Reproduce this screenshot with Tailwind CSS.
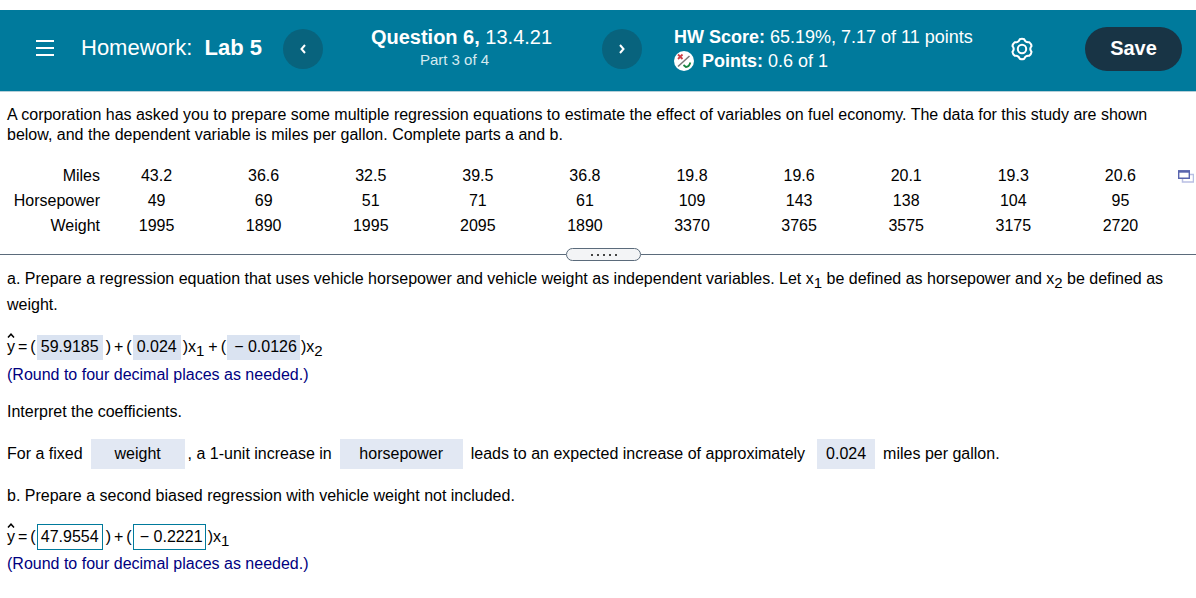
<!DOCTYPE html>
<html lang="en">
<head>
<meta charset="utf-8">
<meta name="viewport" content="width=device-width, initial-scale=1">
<title>Homework: Lab 5</title>
<script src="https://cdn.jsdelivr.net/npm/@tailwindcss/browser@4"></script>
</head>
<body class="bg-white pt-[10px] font-['Liberation_Sans',Arial,sans-serif] text-base leading-5 text-black">
<header class="flex h-[82px] items-start border-b border-[#b5cfd8] bg-[#007a9c] pr-[14px] pl-9 text-white">
  <button type="button" aria-label="Menu" class="mt-7 h-5 w-[19px] shrink-0">
    <svg viewBox="0 0 19 20" class="h-5 w-[19px]" fill="none" stroke="currentColor" stroke-width="2"><path d="M0 3h18M0 10h18M0 17h18"/></svg>
  </button>
  <h1 class="mt-6 ml-[26px] w-[202px] shrink-0 text-[22px] leading-7 whitespace-nowrap">Homework:&nbsp; <b>Lab 5</b></h1>
  <button type="button" aria-label="Previous question" class="mt-[19px] flex size-10 shrink-0 items-center justify-center rounded-full bg-[#08637d]">
    <svg viewBox="0 0 8 12" class="h-3 w-2" fill="none" stroke="currentColor" stroke-width="2"><path d="M6 2 2.500 6 6 10"/></svg>
  </button>
  <div class="mt-[15px] w-[279px] shrink-0 text-center">
    <p class="pr-[2px] text-xl leading-6"><b>Question 6,</b> 13.4.21</p>
    <p class="pr-4 text-[15px] leading-[22px] text-[#d5eaf0]">Part 3 of 4</p>
  </div>
  <button type="button" aria-label="Next question" class="mt-[19px] flex size-10 shrink-0 items-center justify-center rounded-full bg-[#08637d]">
    <svg viewBox="0 0 8 12" class="h-3 w-2" fill="none" stroke="currentColor" stroke-width="2"><path d="M2 2 5.500 6 2 10"/></svg>
  </button>
  <div class="mt-[15px] ml-8 text-lg leading-6 whitespace-nowrap">
    <p><b>HW Score:</b> 65.19%, 7.17 of 11 points</p>
    <p class="flex items-center gap-2">
      <svg viewBox="0 0 20 20" class="size-5" fill="none" aria-hidden="true"><circle cx="10" cy="10" r="10" fill="#fff"/><path d="M4 15.500 15.500 5" stroke="#777" stroke-width="1.500"/><path d="m4 3.500 4.500 4.500m0-4.500L4 8" stroke="#cf4048" stroke-width="1.800"/><path d="m9.500 14 2.500 2c2 0 3.500-1.500 4.300-4.500" stroke="#178540" stroke-width="1.800"/></svg>
      <span><b>Points:</b> 0.6 of 1</span>
    </p>
  </div>
  <button type="button" aria-label="Settings" class="mt-[27px] ml-auto size-6 shrink-0">
    <svg viewBox="0 0 24 24" class="size-6" fill="none" stroke="currentColor" stroke-width="2" stroke-linejoin="round"><path d="M9.750 2.260Q12 1.400 14.250 2.260 15.500 5.940 19.300 5.200 21.200 6.700 21.560 9.100 19 12 21.560 14.900 21.200 17.300 19.300 18.800 15.500 18.060 14.250 21.740 12 22.600 9.750 21.740 8.500 18.060 4.700 18.800 2.800 17.300 2.440 14.900 5 12 2.440 9.100 2.800 6.700 4.700 5.200 8.500 5.940 9.750 2.260Z"/><circle cx="12" cy="12" r="4.200"/></svg>
  </button>
  <button type="button" class="mt-[17px] ml-[51px] h-11 w-[97px] shrink-0 rounded-full bg-[#183445] pb-[2px] text-xl font-bold">Save</button>
</header>

<main>
  <p class="mt-[13px] px-[7px]">A corporation has asked you to prepare some multiple regression equations to estimate the effect of variables on fuel economy. The data for this study are shown below, and the dependent variable is miles per gallon. Complete parts a and b.</p>

  <div class="mt-[18px] flex items-start pr-[2px] pl-[7px]">
    <table class="mr-1 min-w-0 flex-1 table-fixed text-center leading-[25px]">
      <tbody>
        <tr><th scope="row" class="w-24 pr-[3px] text-right font-normal">Miles</th><td>43.2</td><td>36.6</td><td>32.5</td><td>39.5</td><td>36.8</td><td>19.8</td><td>19.6</td><td>20.1</td><td>19.3</td><td>20.6</td></tr>
        <tr><th scope="row" class="pr-[3px] text-right font-normal">Horsepower</th><td>49</td><td>69</td><td>51</td><td>71</td><td>61</td><td>109</td><td>143</td><td>138</td><td>104</td><td>95</td></tr>
        <tr><th scope="row" class="pr-[3px] text-right font-normal">Weight</th><td>1995</td><td>1890</td><td>1995</td><td>2095</td><td>1890</td><td>3370</td><td>3765</td><td>3575</td><td>3175</td><td>2720</td></tr>
      </tbody>
    </table>
    <button type="button" aria-label="Open data in a new window" class="mt-[7px] h-[13px] w-4 shrink-0">
      <svg viewBox="0 0 16 13" class="h-[13px] w-4" fill="none"><path d="M4.500 8v4h11V4.500H12" stroke="#b9bfe3" stroke-width="1.500"/><path d="M.7 1h10.600v7.300H.7z" fill="#fff" stroke="#5965ae" stroke-width="1.400"/><path d="M0 1.500h12" stroke="#5965ae" stroke-width="2.400"/></svg>
    </button>
  </div>

  <div class="mt-[10px] flex items-center">
    <span class="h-px flex-1 bg-[#5b6b7b]"></span>
    <button type="button" aria-label="Resize panes" class="flex h-[13px] w-[75px] items-center justify-center gap-1 rounded-full border border-[#5b6b7b] bg-[#f3f4f6]">
      <i class="size-[2px] bg-[#444]"></i><i class="size-[2px] bg-[#444]"></i><i class="size-[2px] bg-[#444]"></i><i class="size-[2px] bg-[#444]"></i><i class="size-[2px] bg-[#444]"></i>
    </button>
    <span class="h-px w-[555px] max-w-1/2 shrink-0 bg-[#5b6b7b]"></span>
  </div>

  <div class="px-[7px]">
    <p class="mt-[5px] leading-[26px]">a. Prepare a regression equation that uses vehicle horsepower and vehicle weight as independent variables. Let x<sub class="text-[15px] leading-none">1</sub> be defined as horsepower and x<sub class="text-[15px] leading-none">2</sub> be defined as weight.</p>

    <div class="mt-4 flex h-[26px] items-center whitespace-nowrap">
      <span class="relative">y<svg viewBox="0 0 8 5" class="absolute top-[-4px] left-0 h-[5px] w-2" fill="none" stroke="#000" stroke-width="1.500" role="img" aria-label="hat"><path d="M1 4.500 4 1.200 7 4.500"/></svg></span><span class="ml-[3px]">=</span><span class="ml-[3px]">(</span>
      <input type="text" readonly aria-label="Intercept, part a" value="59.9185" class="mx-px h-[25px] w-[66px] bg-[#dae3f1] text-center">
      <span class="ml-[2px]">)</span><span class="ml-[3px]">+</span><span class="ml-[3px]">(</span>
      <input type="text" readonly aria-label="Horsepower coefficient, part a" value="0.024" class="mx-px h-[25px] w-12 bg-[#dae3f1] text-center">
      <span class="ml-px">)x<sub class="text-[15px] leading-none">1</sub></span><span class="ml-1">+</span><span class="ml-[3px]">(</span>
      <input type="text" readonly aria-label="Weight coefficient, part a" value="− 0.0126" class="mx-px h-[25px] w-[73px] bg-[#dae3f1] pl-1 text-center">
      <span>)x<sub class="text-[15px] leading-none">2</sub></span>
    </div>
    <p class="mt-[5px] text-[#000080]">(Round to four decimal places as needed.)</p>

    <p class="mt-[17px]">Interpret the coefficients.</p>

    <div class="mt-[17px] flex h-[30px] items-center whitespace-nowrap">
      <span>For a fixed</span>
      <select aria-label="Variable held fixed" class="mr-[3px] ml-2 h-[30px] w-[94px] appearance-none bg-[#e2e8f3] text-center"><option>weight</option></select>
      <span>, a 1-unit increase in</span>
      <select aria-label="Variable that increases" class="mx-2 h-[30px] w-[123px] appearance-none bg-[#e2e8f3] text-center"><option>horsepower</option></select>
      <span>leads to an expected increase of approximately</span>
      <input type="text" readonly aria-label="Expected increase" value="0.024" class="mr-2 ml-3 h-[30px] w-[58px] bg-[#e2e8f3] text-center">
      <span>miles per gallon.</span>
    </div>

    <p class="mt-[17px]">b. Prepare a second biased regression with vehicle weight not included.</p>

    <div class="mt-[18px] flex h-[26px] items-center whitespace-nowrap">
      <span class="relative">y<svg viewBox="0 0 8 5" class="absolute top-[-4px] left-0 h-[5px] w-2" fill="none" stroke="#000" stroke-width="1.500" role="img" aria-label="hat"><path d="M1 4.500 4 1.200 7 4.500"/></svg></span><span class="ml-[3px]">=</span><span class="ml-[3px]">(</span>
      <input type="text" aria-label="Intercept, part b" value="47.9554" class="mx-px h-[26px] w-[66px] border border-[#007a9c] text-center">
      <span class="ml-[2px]">)</span><span class="ml-[3px]">+</span><span class="ml-[3px]">(</span>
      <input type="text" aria-label="Horsepower coefficient, part b" value="− 0.2221" class="mx-px h-[26px] w-[73px] border border-[#007a9c] pl-1 text-center">
      <span class="ml-px">)x<sub class="text-[15px] leading-none">1</sub></span>
    </div>
    <p class="mt-1 text-[#000080]">(Round to four decimal places as needed.)</p>
  </div>
</main>
</body>
</html>
